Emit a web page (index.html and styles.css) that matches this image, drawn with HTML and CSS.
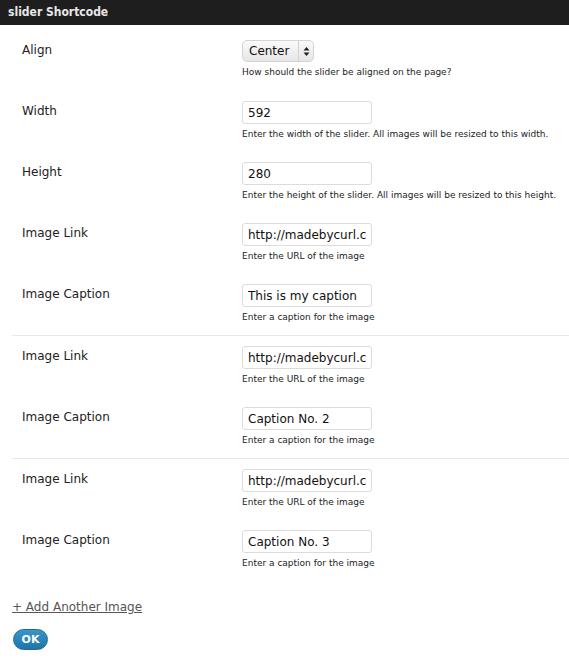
FILE: index.html
```html
<!DOCTYPE html>
<html>
<head>
<meta charset="utf-8">
<link rel="stylesheet" href="styles.css">
</head>
<body>
<div class="header">slider Shortcode</div>
<div class="content">
  <div class="group">
    <div class="row">
      <div class="label">Align</div>
      <div class="field">
        <div class="select"><span class="sel-text">Center</span><span class="sel-arrows"><svg width="7" height="11" viewBox="0 0 7 11"><path d="M3.5 1 L6.5 4.5 L0.5 4.5 Z" fill="#222"/><path d="M3.5 10 L6.5 6.5 L0.5 6.5 Z" fill="#222"/></svg></span></div>
        <div class="help">How should the slider be aligned on the page?</div>
      </div>
    </div>
    <div class="row">
      <div class="label">Width</div>
      <div class="field">
        <input class="text" type="text" value="592">
        <div class="help">Enter the width of the slider. All images will be resized to this width.</div>
      </div>
    </div>
    <div class="row">
      <div class="label">Height</div>
      <div class="field">
        <input class="text" type="text" value="280">
        <div class="help">Enter the height of the slider. All images will be resized to this height.</div>
      </div>
    </div>
    <div class="row">
      <div class="label">Image Link</div>
      <div class="field">
        <input class="text" type="text" value="http://madebycurl.com/images/1.jpg">
        <div class="help">Enter the URL of the image</div>
      </div>
    </div>
    <div class="row">
      <div class="label">Image Caption</div>
      <div class="field">
        <input class="text" type="text" value="This is my caption">
        <div class="help">Enter a caption for the image</div>
      </div>
    </div>
  </div>
  <div class="group">
    <div class="row">
      <div class="label">Image Link</div>
      <div class="field">
        <input class="text" type="text" value="http://madebycurl.com/images/2.jpg">
        <div class="help">Enter the URL of the image</div>
      </div>
    </div>
    <div class="row">
      <div class="label">Image Caption</div>
      <div class="field">
        <input class="text" type="text" value="Caption No. 2">
        <div class="help">Enter a caption for the image</div>
      </div>
    </div>
  </div>
  <div class="group">
    <div class="row">
      <div class="label">Image Link</div>
      <div class="field">
        <input class="text" type="text" value="http://madebycurl.com/images/3.jpg">
        <div class="help">Enter the URL of the image</div>
      </div>
    </div>
    <div class="row">
      <div class="label">Image Caption</div>
      <div class="field">
        <input class="text" type="text" value="Caption No. 3">
        <div class="help">Enter a caption for the image</div>
      </div>
    </div>
  </div>
  <div class="add"><a href="#" class="add-link">+ Add Another Image</a></div>
  <div class="actions"><button class="ok" type="button">OK</button></div>
</div>
</body>
</html>
```
FILE: styles.css
```css
html, body {
  margin: 0;
  padding: 0;
  background: #fff;
}
body {
  font-family: "DejaVu Sans", "Liberation Sans", sans-serif;
  color: #222;
}
.header {
  height: 25px;
  background: #1e1e1e;
  color: #e8e8e8;
  font-family: "DejaVu Sans Condensed", "DejaVu Sans", sans-serif;
  font-weight: bold;
  font-size: 12px;
  line-height: 25px;
  padding-left: 8px;
}
.content {
  padding: 5px 0 0 12px;
}
.group + .group {
  border-top: 1px solid #e8e8e8;
}
.row {
  display: grid;
  grid-template-columns: 230px 1fr;
  height: 61px;
  box-sizing: border-box;
  padding-top: 10px;
}
.label {
  padding-left: 10px;
  padding-top: 3px;
  font-size: 12px;
  line-height: 15px;
  color: #222;
}
.field {
  display: flex;
  flex-direction: column;
  align-items: flex-start;
}
.text {
  box-sizing: border-box;
  width: 130px;
  height: 23px;
  margin: 0;
  padding: 0 5px;
  border: 1px solid #dcdcdc;
  border-radius: 3px;
  font-family: "DejaVu Sans", sans-serif;
  font-size: 12px;
  color: #111;
  background: #fff;
  outline: none;
}
.select {
  box-sizing: border-box;
  width: 72px;
  height: 22px;
  display: flex;
  align-items: center;
  border: 1px solid #d4d4d4;
  border-radius: 5px;
  background: linear-gradient(#fafafa, #e6e6e6);
  font-size: 12px;
}
.sel-text {
  flex: 1;
  padding-left: 6px;
  color: #111;
  border-right: 1px solid #d0d0d0;
  line-height: 20px;
}
.sel-arrows {
  width: 14px;
  display: flex;
  justify-content: center;
  align-items: center;
}
.sel-arrows svg { display: block; }
.help {
  margin-top: 4px;
  font-size: 9px;
  line-height: 13px;
  color: #222;
}
.add {
  padding-top: 19px;
  font-size: 12px;
  line-height: 15px;
}
.add-link {
  color: #555;
  text-decoration: underline;
}
.actions {
  padding-top: 13px;
}
.ok {
  box-sizing: border-box;
  width: 35px;
  height: 21px;
  margin-left: 1px;
  padding: 0;
  border: 1px solid #1d6b9a;
  border-radius: 11px;
  background: linear-gradient(#3a95c9, #1f74a8);
  color: #fff;
  font-family: "DejaVu Sans", sans-serif;
  font-weight: bold;
  font-size: 11px;
  line-height: 19px;
}
```
